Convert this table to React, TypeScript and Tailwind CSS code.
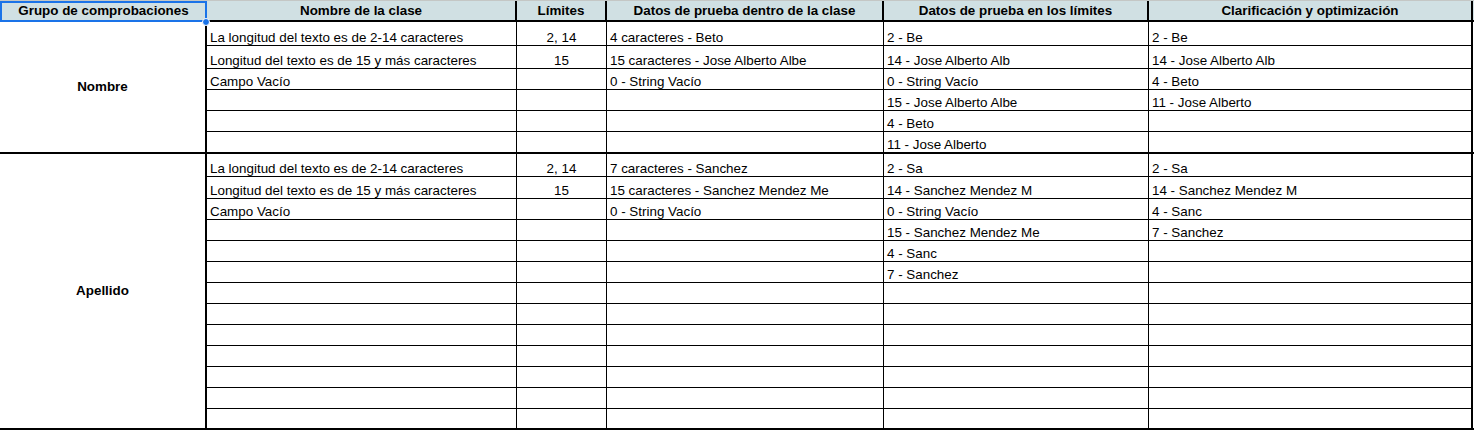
import React from 'react'

const cols = ['w-[207px]', 'w-[310px]', 'w-[90px]', 'w-[277px]', 'w-[265px]', 'w-[324px]']

type Row = { h: string; cells: string[] }

const nombre: Row[] = [
  { h: 'h-[24px]', cells: ['La longitud del texto es de 2-14 caracteres', '2, 14', '4 caracteres - Beto', '2 - Be', '2 - Be'] },
  { h: 'h-[23px]', cells: ['Longitud del texto es de 15 y más caracteres', '15', '15 caracteres - Jose Alberto Albe', '14 - Jose Alberto Alb', '14 - Jose Alberto Alb'] },
  { h: 'h-[21px]', cells: ['Campo Vacío', '', '0 - String Vacío', '0 - String Vacío', '4 - Beto'] },
  { h: 'h-[21px]', cells: ['', '', '', '15 - Jose Alberto Albe', '11 - Jose Alberto'] },
  { h: 'h-[21px]', cells: ['', '', '', '4 - Beto', ''] },
  { h: 'h-[20px]', cells: ['', '', '', '11 - Jose Alberto', ''] },
]

const apellido: Row[] = [
  { h: 'h-[23px]', cells: ['La longitud del texto es de 2-14 caracteres', '2, 14', '7 caracteres - Sanchez', '2 - Sa', '2 - Sa'] },
  { h: 'h-[22px]', cells: ['Longitud del texto es de 15 y más caracteres', '15', '15 caracteres - Sanchez Mendez Me', '14 - Sanchez Mendez M', '14 - Sanchez Mendez M'] },
  { h: 'h-[21px]', cells: ['Campo Vacío', '', '0 - String Vacío', '0 - String Vacío', '4 - Sanc'] },
  { h: 'h-[21px]', cells: ['', '', '', '15 - Sanchez Mendez Me', '7 - Sanchez'] },
  { h: 'h-[21px]', cells: ['', '', '', '4 - Sanc', ''] },
  { h: 'h-[21px]', cells: ['', '', '', '7 - Sanchez', ''] },
  { h: 'h-[21px]', cells: ['', '', '', '', ''] },
  { h: 'h-[21px]', cells: ['', '', '', '', ''] },
  { h: 'h-[21px]', cells: ['', '', '', '', ''] },
  { h: 'h-[21px]', cells: ['', '', '', '', ''] },
  { h: 'h-[21px]', cells: ['', '', '', '', ''] },
  { h: 'h-[21px]', cells: ['', '', '', '', ''] },
  { h: 'h-[19px]', cells: ['', '', '', '', ''] },
]

function Section({ label, rows }: { label: string; rows: Row[] }) {
  return (
    <div className="flex border-b-2 border-black">
      <div className={`${cols[0]} shrink-0 border-r-2 border-black flex items-center justify-center font-bold`}>
        {label}
      </div>
      <div className="flex flex-col">
        {rows.map((r, i) => (
          <div key={i} className={`flex ${r.h} ${i < rows.length - 1 ? 'border-b border-black' : ''}`}>
            {r.cells.map((c, j) => (
              <div
                key={j}
                className={`${cols[j + 1]} shrink-0 flex items-end pb-[1px] px-[3px] whitespace-nowrap overflow-hidden ${
                  j === 4 ? 'border-r-2' : 'border-r'
                } border-black ${j === 1 ? 'justify-center' : ''}`}
              >
                {c}
              </div>
            ))}
          </div>
        ))}
      </div>
    </div>
  )
}

export default function App() {
  const headers = [
    'Nombre de la clase',
    'Límites',
    'Datos de prueba dentro de la clase',
    'Datos de prueba en los límites',
    'Clarificación y optimización',
  ]

  return (
    <div className="w-[1474px] h-[431px] bg-white text-black text-[13.4px] leading-none font-['Liberation_Sans',Arial,sans-serif] overflow-hidden">
      <div className="flex h-[22px] border-t border-[#c4c7c5] border-b-2 border-b-black bg-[#d0e0e3] font-bold">
        <div className={`${cols[0]} shrink-0 relative flex items-center justify-center`}>
          Grupo de comprobaciones
          <div className="absolute left-0 top-0 w-[207px] h-[21px] border-2 border-[#1a73e8]" />
          <div className="absolute left-[202px] top-[17px] w-[8px] h-[8px] rounded-full bg-[#1a73e8] border border-white z-10" />
        </div>
        {headers.map((h, i) => (
          <div key={i} className={`${cols[i + 1]} shrink-0 flex items-center justify-center border-r-2 border-black`}>
            {h}
          </div>
        ))}
      </div>
      <Section label="Nombre" rows={nombre} />
      <Section label="Apellido" rows={apellido} />
    </div>
  )
}
